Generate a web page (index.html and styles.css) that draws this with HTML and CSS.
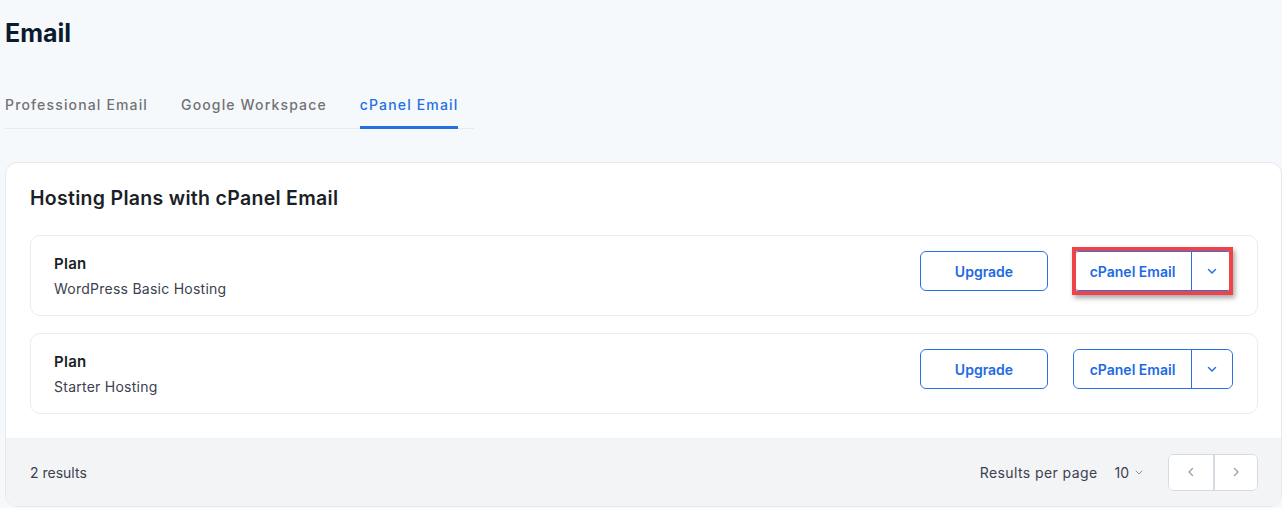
FILE: index.html
```html
<!DOCTYPE html>
<html lang="en">
<head>
  <meta charset="UTF-8" />
  <meta name="viewport" content="width=device-width, initial-scale=1" />
  <title>Email</title>
  <link rel="stylesheet" href="styles.css">
</head>
<body>

  <h1 class="page-title">Email</h1>

  <nav class="tabs">
    <a class="tab">Professional Email</a>
    <a class="tab">Google Workspace</a>
    <a class="tab active">cPanel Email</a>
  </nav>

  <section class="card">
    <div class="card-body">
      <h2 class="card-title">Hosting Plans with cPanel Email</h2>

      <div class="plan-row">
        <div class="plan-info">
          <div class="plan-label">Plan</div>
          <div class="plan-name">WordPress Basic Hosting</div>
        </div>
        <div class="plan-actions">
          <button class="btn">Upgrade</button>
          <div class="split highlighted">
            <button class="split-main">cPanel Email</button>
            <button class="split-toggle">
              <svg width="12" height="12" viewBox="0 0 12 12"><path d="M2.5 4.5 6 8l3.5-3.5" fill="none" stroke="currentColor" stroke-width="1.5" stroke-linecap="round" stroke-linejoin="round"/></svg>
            </button>
          </div>
        </div>
      </div>

      <div class="plan-row">
        <div class="plan-info">
          <div class="plan-label">Plan</div>
          <div class="plan-name">Starter Hosting</div>
        </div>
        <div class="plan-actions">
          <button class="btn">Upgrade</button>
          <div class="split">
            <button class="split-main">cPanel Email</button>
            <button class="split-toggle">
              <svg width="12" height="12" viewBox="0 0 12 12"><path d="M2.5 4.5 6 8l3.5-3.5" fill="none" stroke="currentColor" stroke-width="1.5" stroke-linecap="round" stroke-linejoin="round"/></svg>
            </button>
          </div>
        </div>
      </div>
    </div>

    <footer class="card-footer">
      <span class="count">2 results</span>
      <div class="paging">
        <span class="per-page-label">Results per page</span>
        <span class="per-page">10
          <svg width="10" height="10" viewBox="0 0 10 10"><path d="M2 4l3 3 3-3" fill="none" stroke="currentColor" stroke-width="1" stroke-linecap="round"/></svg>
        </span>
        <div class="pager">
          <button class="pager-btn">
            <svg width="10" height="12" viewBox="0 0 10 12"><path d="M6.5 2.5 3 6l3.5 3.5" fill="none" stroke="currentColor" stroke-width="1.3" stroke-linecap="round" stroke-linejoin="round"/></svg>
          </button>
          <button class="pager-btn">
            <svg width="10" height="12" viewBox="0 0 10 12"><path d="M3.5 2.5 7 6 3.5 9.5" fill="none" stroke="currentColor" stroke-width="1.3" stroke-linecap="round" stroke-linejoin="round"/></svg>
          </button>
        </div>
      </div>
    </footer>
  </section>

</body>
</html>
```

FILE: styles.css
```css
body {
  margin: 0;
  padding: 0 0 0 5px;
  font-family: Inter, "Noto Sans", Arial, sans-serif;
  background: #f6f9fc;
  color: #1f2937;
}

.page-title {
  margin: 0;
  padding-top: 17px;
  font-size: 25px;
  line-height: 32px;
  font-weight: 700;
  color: #0c1a2e;
}

.tabs {
  display: flex;
  gap: 33px;
  width: 469px;
  margin-top: 46px;
  border-bottom: 1px solid #e6e9ee;
}

.tab {
  padding-bottom: 11px;
  font-size: 14px;
  line-height: 20px;
  letter-spacing: 1.15px;
  font-weight: 500;
  color: #727276;
  border-bottom: 3px solid transparent;
  margin-bottom: -1px;
}

.tab.active {
  color: #2371e0;
  border-bottom-color: #2371e0;
}

.card {
  margin-top: 33px;
  background: #fff;
  border: 1px solid #e6e8ec;
  border-radius: 12px;
  overflow: hidden;
}

.card-body {
  padding: 21px 23px 24px 24px;
}

.card-title {
  margin: 0 0 23px;
  font-size: 19.5px;
  line-height: 28px;
  letter-spacing: 0.3px;
  font-weight: 600;
  color: #1b1f27;
}

.plan-row {
  display: flex;
  align-items: flex-start;
  justify-content: space-between;
  height: 81px;
  box-sizing: border-box;
  padding: 0 24px 0 23px;
  border: 1px solid #e9ebef;
  border-radius: 10px;
}

.plan-row + .plan-row {
  margin-top: 17px;
}

.plan-info {
  padding-top: 17px;
}

.plan-label {
  font-size: 15px;
  line-height: 22px;
  letter-spacing: 0.3px;
  font-weight: 600;
  color: #1b1f27;
}

.plan-name {
  margin-top: 3px;
  font-size: 14px;
  line-height: 22px;
  letter-spacing: 0.25px;
  color: #3b4150;
}

.plan-actions {
  display: flex;
  align-items: center;
  gap: 25px;
  padding-top: 15px;
}

button {
  font-family: inherit;
  cursor: pointer;
}

.btn,
.split-main {
  height: 40px;
  padding: 0;
  font-size: 14px;
  font-weight: 600;
  color: #1e6ae3;
  background: #fff;
}

.btn {
  width: 128px;
  border: 1px solid #2a72e2;
  border-radius: 6px;
}

.split {
  position: relative;
  display: flex;
  height: 40px;
  border: 1px solid #2a72e2;
  border-radius: 6px;
  box-sizing: border-box;
}

.split-main {
  width: 118px;
  height: 38px;
  border: 0;
  border-right: 1px solid #2a72e2;
  border-radius: 6px 0 0 6px;
}

.split-toggle {
  width: 40px;
  height: 38px;
  padding: 0;
  border: 0;
  border-radius: 0 6px 6px 0;
  background: #fff;
  color: #2a72e2;
  display: flex;
  align-items: center;
  justify-content: center;
}

/* annotation box around the first action */
.split.highlighted::after {
  content: "";
  position: absolute;
  top: -5px;
  bottom: -5px;
  left: -2px;
  right: -1px;
  border: 4px solid #ee4347;
  box-shadow: 2px 3px 5px rgba(0, 0, 0, 0.35);
  pointer-events: none;
}

.card-footer {
  display: flex;
  align-items: center;
  justify-content: space-between;
  height: 68px;
  padding: 0 23px 0 24px;
  background: #f3f4f6;
}

.count {
  font-size: 14px;
  color: #3b4150;
}

.paging {
  display: flex;
  align-items: center;
  font-size: 14px;
  color: #3b4150;
}

.per-page-label {
  letter-spacing: 0.4px;
}

.per-page {
  display: flex;
  align-items: center;
  gap: 5px;
  margin-left: 17px;
  margin-right: 24px;
}

.per-page svg {
  color: #8a8f99;
}

.pager {
  display: flex;
  height: 35px;
  border: 1px solid #d7dae0;
  border-radius: 6px;
  background: #fff;
  overflow: hidden;
}

.pager-btn {
  width: 44px;
  padding: 0;
  border: 0;
  background: #fff;
  color: #9aa0a8;
  display: flex;
  align-items: center;
  justify-content: center;
}

.pager-btn + .pager-btn {
  border-left: 2px solid #d7dae0;
}
```
